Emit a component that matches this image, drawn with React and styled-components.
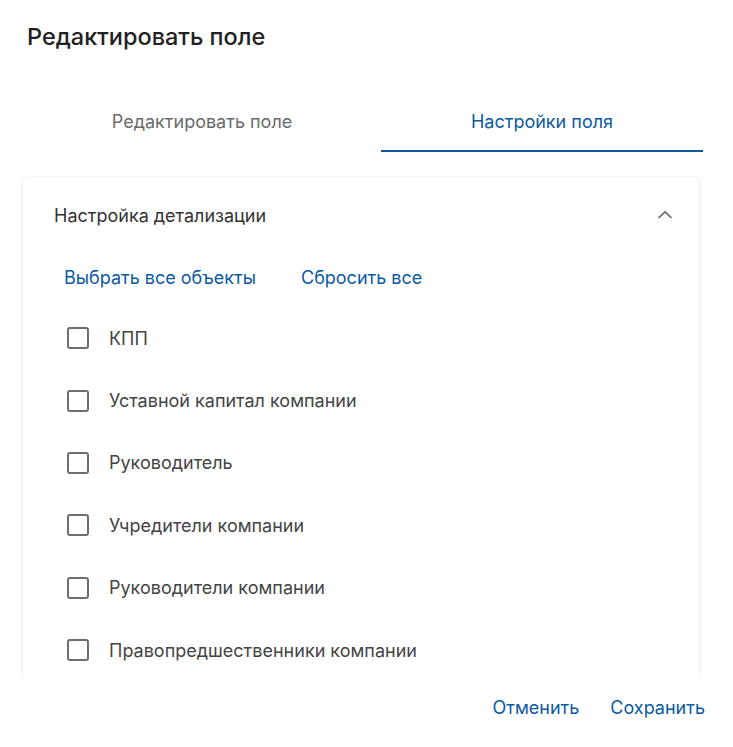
import React, { useState } from 'react';
import styled, { createGlobalStyle } from 'styled-components';

const GlobalStyle = createGlobalStyle`
  html, body {
    margin: 0;
    padding: 0;
    background: #fff;
  }
  body {
    font-family: Inter, "Noto Sans", sans-serif;
    color: #333;
  }
`;

const Dialog = styled.div`
  width: 733px;
  height: 747px;
  display: flex;
  flex-direction: column;
  box-sizing: border-box;
  overflow: hidden;
`;

const Title = styled.h2`
  margin: 0;
  padding: 22px 27px 0;
  font-size: 23.5px;
  font-weight: 500;
  line-height: 30px;
  color: #222;
`;

const Tabs = styled.div`
  display: flex;
  margin: 46px 30px 0 23px;
`;

const Tab = styled.button`
  flex: ${({ $grow }) => $grow};
  height: 54px;
  padding: 0 0 6px;
  border: 0;
  border-bottom: 2px solid ${({ $active }) => ($active ? '#0b5aa2' : 'transparent')};
  background: none;
  font-family: inherit;
  font-size: 18px;
  color: ${({ $active }) => ($active ? '#0b5aa2' : '#6b6b6b')};
  cursor: pointer;
`;

const Content = styled.div`
  flex: 1;
  overflow: hidden;
  padding: 25px 34px 0 23px;
`;

const Card = styled.section`
  background: #fff;
  border-radius: 5px;
  box-shadow: 0 1px 4px rgba(0, 0, 0, 0.12), 0 0 1px rgba(0, 0, 0, 0.08);
  padding-bottom: 40px;
`;

const CardHeader = styled.div`
  display: flex;
  align-items: center;
  justify-content: space-between;
  height: 76px;
  padding: 0 26px 0 31px;
  font-size: 18px;
  color: #333;
`;

const Actions = styled.div`
  display: flex;
  gap: 45px;
  padding: 0 41px;
  height: 48px;
  align-items: center;
`;

const LinkButton = styled.button`
  padding: 0;
  border: 0;
  background: none;
  font-family: inherit;
  font-size: 18px;
  color: #0b5aa2;
  cursor: pointer;
`;

const List = styled.div`
  display: flex;
  flex-direction: column;
  padding: 6px 0 0 44px;
`;

const Row = styled.label`
  display: flex;
  align-items: center;
  gap: 20px;
  height: 62.4px;
  font-size: 18px;
  color: #444;
  cursor: pointer;
`;

const Box = styled.span`
  box-sizing: border-box;
  width: 22px;
  height: 22px;
  border: 2px solid ${({ $checked }) => ($checked ? '#0b5aa2' : '#6e6e6e')};
  border-radius: 3px;
  background: ${({ $checked }) => ($checked ? '#0b5aa2' : '#fff')};
`;

const Footer = styled.div`
  display: flex;
  justify-content: flex-end;
  gap: 31px;
  height: 73px;
  padding: 0 28px 6px 0;
  box-sizing: border-box;
  align-items: center;
`;

const Chevron = () => (
  <svg width="16" height="16" viewBox="0 0 16 16" fill="none">
    <path d="M1.5 11 L8 4.8 L14.5 11" stroke="#666" strokeWidth="1.7" />
  </svg>
);

const items = [
  'КПП',
  'Уставной капитал компании',
  'Руководитель',
  'Учредители компании',
  'Руководители компании',
  'Правопредшественники компании',
];

export default function App() {
  const [checked, setChecked] = useState({});
  const toggle = (i) => setChecked((c) => ({ ...c, [i]: !c[i] }));

  return (
    <Dialog>
      <GlobalStyle />
      <Title>Редактировать поле</Title>
      <Tabs>
        <Tab $grow={358}>Редактировать поле</Tab>
        <Tab $grow={322} $active>Настройки поля</Tab>
      </Tabs>
      <Content>
        <Card>
          <CardHeader>
            <span>Настройка детализации</span>
            <Chevron />
          </CardHeader>
          <Actions>
            <LinkButton>Выбрать все объекты</LinkButton>
            <LinkButton>Сбросить все</LinkButton>
          </Actions>
          <List>
            {items.map((label, i) => (
              <Row key={label} onClick={() => toggle(i)}>
                <Box $checked={!!checked[i]} />
                <span>{label}</span>
              </Row>
            ))}
          </List>
        </Card>
      </Content>
      <Footer>
        <LinkButton>Отменить</LinkButton>
        <LinkButton>Сохранить</LinkButton>
      </Footer>
    </Dialog>
  );
}
